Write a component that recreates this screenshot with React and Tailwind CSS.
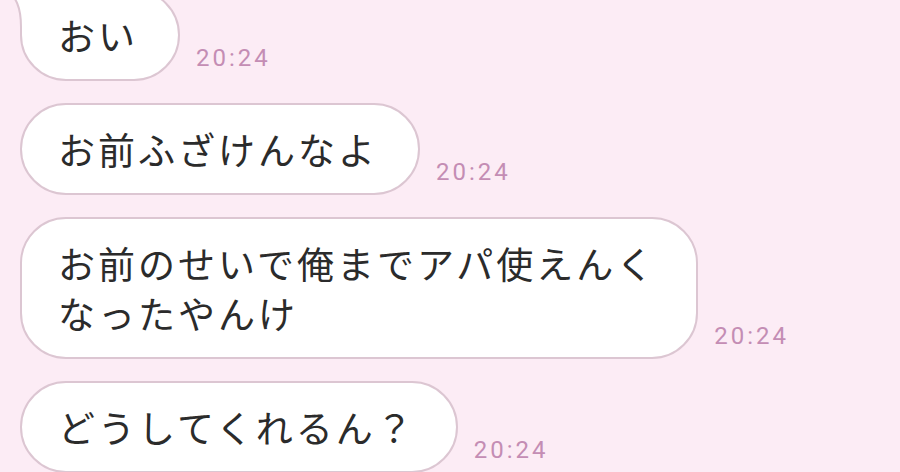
import React from "react";

const jp = { fontFamily: '"Noto Sans CJK JP", "Noto Sans", sans-serif' };

function Time() {
  return (
    <span
      className="ml-[16px] mb-[10px] text-[24px] leading-[26px] tracking-[3px] text-[#c48db4] whitespace-nowrap"
      style={{ fontFamily: 'Roboto, "Liberation Sans", sans-serif' }}
    >
      20:24
    </span>
  );
}

function Bubble({ children, first }) {
  return (
    <div className="flex items-end">
      <div
        className={
          "relative bg-white border-2 border-[#dcc6d2] rounded-[46px] pl-[36px] pr-[40px] py-[19px] text-[37px] leading-[50px] tracking-[3px] text-[#2b2b2b] whitespace-nowrap " +
          (first ? "rounded-tl-none" : "")
        }
        style={jp}
      >
        {first && (
          <svg
            className="absolute left-[-16px] top-[-2px]"
            width="26"
            height="46"
            viewBox="0 0 26 46"
          >
            <path d="M0 0 L26 0 L26 38 L15 38 C15 18 10 8 0 0 Z" fill="#ffffff" />
            <path
              d="M0 0 C10 8 15 18 15 38 L15 46"
              fill="none"
              stroke="#dcc6d2"
              strokeWidth="2"
            />
          </svg>
        )}
        <span className="relative">{children}</span>
      </div>
      <Time />
    </div>
  );
}

export default function App() {
  return (
    <div className="w-[900px] h-[472px] overflow-hidden bg-[#fcecf5]">
      <div className="flex flex-col gap-[22px] pl-[20px] -mt-[11px]">
        <Bubble first>おい</Bubble>
        <Bubble>お前ふざけんなよ</Bubble>
        <Bubble>
          お前のせいで俺までアパ使えんく
          <br />
          なったやんけ
        </Bubble>
        <Bubble>どうしてくれるん？</Bubble>
      </div>
    </div>
  );
}
